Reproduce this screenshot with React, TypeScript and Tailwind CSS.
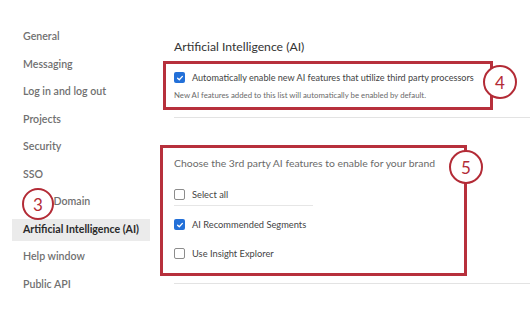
import React from 'react';

const navItems = [
  'General',
  'Messaging',
  'Log in and log out',
  'Projects',
  'Security',
  'SSO',
  'Brand Domain',
  'Artificial Intelligence (AI)',
  'Help window',
  'Public API',
];

// Numbered callout circle drawn over the screenshot
const Callout: React.FC<{ n: number; className: string }> = ({ n, className }) => (
  <div
    className={`absolute rounded-full border-[2.5px] border-[#b32b36] bg-white flex items-center justify-center text-[17px] leading-none text-[#b32b36] ${className}`}
  >
    {n}
  </div>
);

const Checkbox: React.FC<{ checked?: boolean }> = ({ checked }) =>
  checked ? (
    <div className="w-[11px] h-[11px] rounded-[2px] bg-[#2370d8] flex items-center justify-center shrink-0">
      <svg width="8" height="8" viewBox="0 0 8 8">
        <path d="M1.6 4.2 L3.3 5.8 L6.4 2.4" fill="none" stroke="white" strokeWidth="1.3" strokeLinecap="round" strokeLinejoin="round" />
      </svg>
    </div>
  ) : (
    <div className="w-[11px] h-[11px] rounded-[2px] border border-[#8c8c8c] bg-white shrink-0" />
  );

export default function App() {
  return (
    <div
      className="relative w-[530px] h-[311px] bg-white flex overflow-hidden"
      style={{ fontFamily: 'Lato, "Liberation Sans", sans-serif' }}
    >
      {/* Sidebar */}
      <div className="w-[160px] shrink-0 pt-[23.5px] flex flex-col">
        {navItems.map((item) => {
          const active = item === 'Artificial Intelligence (AI)';
          return (
            <div key={item} className="h-[27.5px] flex items-center">
              <div
                className={`ml-[12px] w-[138px] h-[22px] pl-[11px] flex items-center text-[10.6px] whitespace-nowrap ${
                  active ? 'bg-[#ebebeb] text-[#2a2a2a] font-bold' : 'text-[#707070] font-semibold'
                }`}
              >
                {item}
              </div>
            </div>
          );
        })}
      </div>

      {/* Main content */}
      <div className="flex-1 flex flex-col">
        <div className="mt-[37px] ml-[14px] text-[12.2px] leading-[20px] text-[#333]">
          Artificial Intelligence (AI)
        </div>

        <div className="mt-[4px] ml-[3px] w-[330px] h-[49px] border-[3px] border-[#b7303c] pl-[8px] pt-[7px] flex flex-col">
          <div className="flex items-center gap-[7px] h-[13px]">
            <Checkbox checked />
            <span className="text-[9.1px] text-[#444] whitespace-nowrap">
              Automatically enable new AI features that utilize third party processors
            </span>
          </div>
          <div className="mt-[6px] text-[7.8px] leading-[11px] text-[#6a6a6a] whitespace-nowrap">
            New AI features added to this list will automatically be enabled by default.
          </div>
        </div>

        <div className="mt-[7px] ml-[14px] h-px bg-[#e3e3e3]" />

        <div className="mt-[27px] w-[307px] h-[131px] border-[3px] border-[#b7303c] pl-[11px] pt-[8px] flex flex-col">
          <div className="text-[10.4px] leading-[14px] text-[#6a6a6a] whitespace-nowrap">
            Choose the 3rd party AI features to enable for your brand
          </div>
          <div className="mt-[18px] flex items-center gap-[7px] h-[13px]">
            <Checkbox />
            <span className="text-[9.3px] text-[#444]">Select all</span>
          </div>
          <div className="mt-[4px] w-[139px] h-px bg-[#e6e6e6]" />
          <div className="mt-[12px] flex items-center gap-[7px] h-[13px]">
            <Checkbox checked />
            <span className="text-[9.3px] text-[#444]">AI Recommended Segments</span>
          </div>
          <div className="mt-[16px] flex items-center gap-[7px] h-[13px]">
            <Checkbox />
            <span className="text-[9.3px] text-[#444]">Use Insight Explorer</span>
          </div>
        </div>

        <div className="mt-[7px] ml-[14px] h-px bg-[#e3e3e3]" />
      </div>

      <Callout n={3} className="left-[22px] top-[188px] w-[32px] h-[32px]" />
      <Callout n={4} className="left-[483px] top-[65px] w-[34px] h-[34px]" />
      <Callout n={5} className="left-[449px] top-[150px] w-[34px] h-[34px]" />
    </div>
  );
}
